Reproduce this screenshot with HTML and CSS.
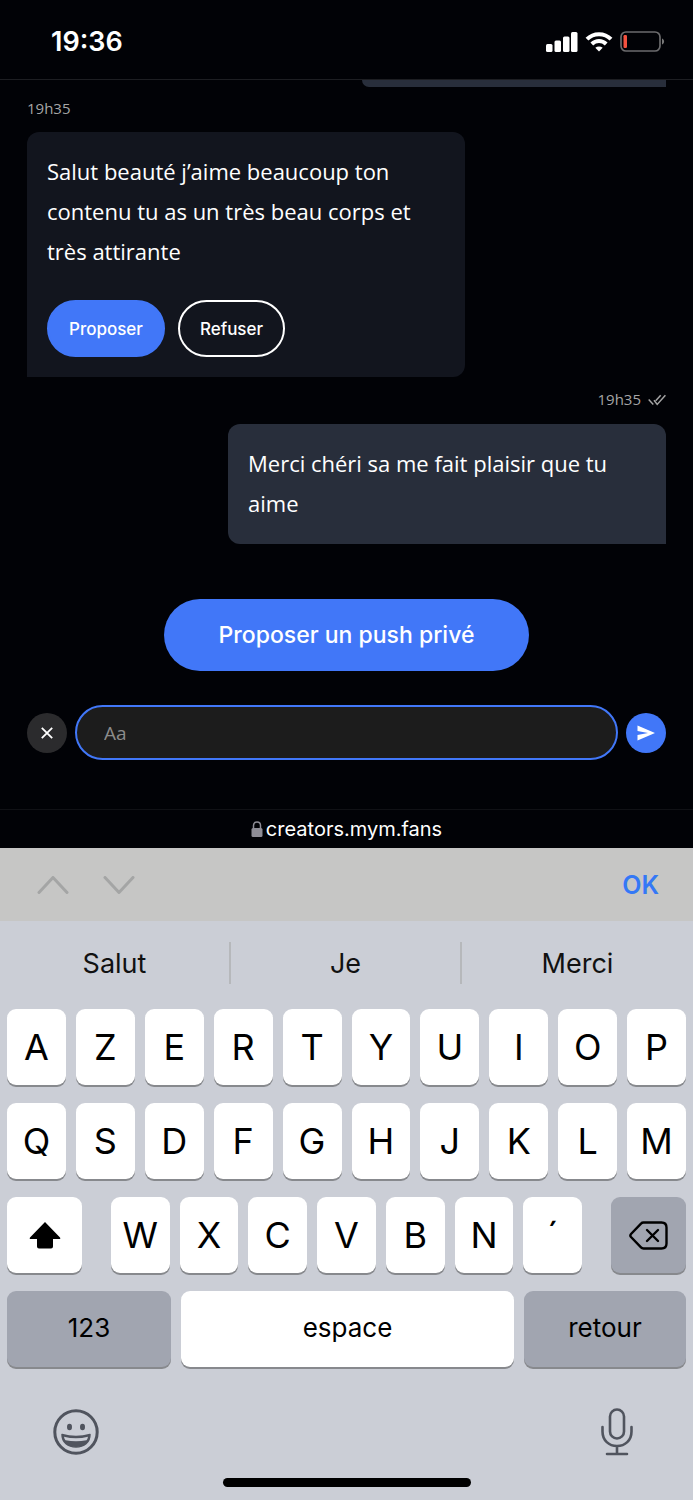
FILE: index.html
```html
<!DOCTYPE html>
<html lang="fr">
<head>
<meta charset="utf-8">
<meta name="viewport" content="width=device-width, initial-scale=1">
<title>Messages</title>
<link rel="stylesheet" href="styles.css">
</head>
<body>
<header class="status">
  <time class="clock">19:36</time>
  <div class="indicators">
    <svg width="32" height="20" viewBox="0 0 32 20" fill="#fff" aria-hidden="true"><rect x="0" y="12" width="6.500" height="8" rx="1.500"/><rect x="8.500" y="8.500" width="6.500" height="11.500" rx="1.500"/><rect x="17" y="4.500" width="6.500" height="15.500" rx="1.500"/><rect x="25" y="0" width="6.500" height="20" rx="1.500"/></svg>
    <svg width="28" height="20" viewBox="0 0 28 20" aria-hidden="true"><g fill="none" stroke="#fff" stroke-width="4"><path d="M2 7.200C8.500.5 19.500.5 26 7.200"/><path d="M6.800 12C11 8 17 8 21.200 12"/></g><path d="M10.300 15.700C12.500 14 15.500 14 17.700 15.700L14 19.600Z" fill="#fff"/></svg>
    <svg width="45" height="21" viewBox="0 0 45 21" aria-hidden="true"><rect x="1" y="1" width="39" height="19" rx="5" fill="none" stroke="#6b6b6d" stroke-width="1.700"/><rect x="3.500" y="4" width="3.500" height="13" rx="1.200" fill="#f4513f"/><path d="M42 7.500C44.800 8.500 44.800 12.500 42 13.500Z" fill="#777"/></svg>
  </div>
</header>
<main class="chat">
  <div class="bubble sent previous"></div>
  <time class="stamp">19h35</time>
  <article class="bubble received">
    <p>Salut beauté j’aime beaucoup ton contenu tu as un très beau corps et très attirante</p>
    <div class="actions">
      <button class="pill filled" type="button">Proposer</button>
      <button class="pill outline" type="button">Refuser</button>
    </div>
  </article>
  <div class="stamp stamp-sent"><time>19h35</time>
    <svg width="18" height="12" viewBox="0 0 18 12" fill="none" stroke="#a5a5a5" stroke-width="1.500" aria-hidden="true"><path d="M.7 5.600L5.300 10.400M6 6.200L9.200 10.400L17.400 1.200M7.700 6.700L12.700 1.200"/></svg>
  </div>
  <article class="bubble sent"><p>Merci chéri sa me fait plaisir que tu aime</p></article>
  <button class="push" type="button">Proposer un push privé</button>
  <form class="composer">
    <button class="round close" type="button" aria-label="Fermer"><svg width="12" height="12" viewBox="0 0 12 12" stroke="#fff" stroke-width="1.800" aria-hidden="true"><path d="M.8.8L11.200 11.200M11.200.8L.8 11.200"/></svg></button>
    <input class="message" type="text" placeholder="Aa" aria-label="Message">
    <button class="round send" type="button" aria-label="Envoyer"><svg width="18" height="16" viewBox="0 0 18 16" fill="#fff" aria-hidden="true"><path d="M.5.5L18 8L.5 15.500V10L11 8L.5 6Z"/></svg></button>
  </form>
</main>
<div class="address">
  <svg width="12" height="16" viewBox="0 0 12 16" aria-hidden="true"><path d="M2.500 8V4.500C2.500-.3 9.500-.3 9.500 4.500V8" fill="none" stroke="#8e8d96" stroke-width="1.500"/><rect x=".5" y="7" width="11" height="9" rx="1.500" fill="#8e8d96"/></svg>
  <span>creators.mym.fans</span>
</div>
<div class="accessory">
  <button type="button" aria-label="Champ précédent"><svg width="32" height="18" viewBox="0 0 32 18" aria-hidden="true"><path d="M2 16.500L16 1.500L30 16.500"/></svg></button>
  <button type="button" aria-label="Champ suivant"><svg width="32" height="18" viewBox="0 0 32 18" aria-hidden="true"><path d="M2 1.500L16 16.500L30 1.500"/></svg></button>
  <button class="ok" type="button">OK</button>
</div>
<section class="keyboard" aria-label="Clavier">
  <div class="suggestions"><button type="button">Salut</button><button type="button">Je</button><button type="button">Merci</button></div>
  <div class="keys">
    <div class="row ten"><button class="key">A</button><button class="key">Z</button><button class="key">E</button><button class="key">R</button><button class="key">T</button><button class="key">Y</button><button class="key">U</button><button class="key">I</button><button class="key">O</button><button class="key">P</button></div>
    <div class="row ten"><button class="key">Q</button><button class="key">S</button><button class="key">D</button><button class="key">F</button><button class="key">G</button><button class="key">H</button><button class="key">J</button><button class="key">K</button><button class="key">L</button><button class="key">M</button></div>
    <div class="row third">
      <button class="key side" aria-label="Majuscule"><svg width="32" height="28" viewBox="0 0 32 28" aria-hidden="true"><path d="M16 1L31 16.500Q32 18 30 18H24V25.500Q24 27.500 22 27.500H10Q8 27.500 8 25.500V18H2Q0 18 1 16.500Z"/></svg></button>
      <div class="row seven"><button class="key">W</button><button class="key">X</button><button class="key">C</button><button class="key">V</button><button class="key">B</button><button class="key">N</button><button class="key">´</button></div>
      <button class="key side dark" aria-label="Effacer"><svg width="39" height="29" viewBox="0 0 39 29" fill="none" stroke="#000" stroke-width="2.400" stroke-linejoin="round" stroke-linecap="round" aria-hidden="true"><path d="M14.500 1.500H32.500Q37.500 1.500 37.500 6.500V22.500Q37.500 27.500 32.500 27.500H14.500Q13 27.500 12 26.400L2 16Q.7 14.500 2 13L12 2.600Q13 1.500 14.500 1.500Z"/><path d="M18 9L29 20M29 9L18 20"/></svg></button>
    </div>
    <div class="row fourth"><button class="key word dark">123</button><button class="key word">espace</button><button class="key word dark">retour</button></div>
  </div>
  <div class="tools">
    <button type="button" aria-label="Emoji"><svg width="46" height="46" viewBox="0 0 46 46" aria-hidden="true"><circle cx="23" cy="23" r="21.200" fill="none" stroke="#50545e" stroke-width="3"/><ellipse cx="16.500" cy="18" rx="2.500" ry="3.200" fill="#50545e"/><ellipse cx="29.500" cy="18" rx="2.500" ry="3.200" fill="#50545e"/><path d="M9 25.500Q23 29.500 37 25.500C37 33.500 31 38 23 38S9 33.500 9 25.500Z" fill="#50545e" stroke="#50545e" stroke-width="1.500" stroke-linejoin="round"/><path d="M11 27.800Q23 30.800 35 27.800Q34.500 30.500 33.500 31.200Q23 33.500 12.500 31.200Q11.300 30 11 27.800Z" fill="#cbced6"/></svg></button>
    <button type="button" aria-label="Dictée"><svg width="32" height="48" viewBox="0 0 32 48" fill="none" stroke="#50545e" stroke-width="2.600" stroke-linecap="round" aria-hidden="true"><rect x="9" y="1.500" width="14" height="29" rx="7"/><path d="M1.500 19V23.500C1.500 32.500 8 38 16 38S30.500 32.500 30.500 23.500V19M16 38V46M6 46H26"/></svg></button>
  </div>
  <div class="home"></div>
</section>
</body>
</html>
```
FILE: styles.css
```css
* { box-sizing: border-box; }
body { display: flex; flex-direction: column; min-height: 100vh; margin: 0; background: #010206; color: #fff; font-family: Inter, sans-serif; }
button { border: 0; padding: 0; margin: 0; background: none; color: inherit; font: inherit; }
svg { display: block; flex: none; }
p { margin: 0; }
.status { display: flex; align-items: center; justify-content: space-between; height: 80px; padding: 4px 28px 0 51px; border-bottom: 1px solid #1d1e22; }
.clock { font-size: 27px; font-weight: 600; }
.indicators { display: flex; align-items: center; gap: 7px; }
.chat { display: flex; flex-direction: column; padding: 0 27px 49px; }
.bubble { width: 438px; max-width: 100%; padding: 19px 20px 21px; border-radius: 12px; font-family: "Open Sans", sans-serif; font-size: 22px; line-height: 40px; }
.received { padding-bottom: 20px; background: #12151e; border-bottom-left-radius: 0; align-self: flex-start; }
.sent { background: #282e3b; border-bottom-right-radius: 0; align-self: flex-end; }
.previous { width: 304px; height: 7px; padding: 0; border-radius: 0 0 0 12px; }
.stamp { margin: 11px 0 13px; font-family: "Open Sans", sans-serif; font-size: 15px; line-height: 21px; color: #a5a5a5; }
.stamp-sent { display: flex; align-items: center; justify-content: flex-end; gap: 7px; margin: 12px 0 14px; }
.actions { display: flex; gap: 13px; padding-top: 29px; }
.pill { min-width: 107px; height: 57px; padding: 0 20px; border: 2px solid #fff; border-radius: 29px; font-family: Inter, sans-serif; font-size: 17px; font-weight: 500; line-height: 24px; }
.filled { background: #4177f8; border-color: #4177f8; }
.push { align-self: center; min-width: 365px; height: 72px; margin: 55px 0 34px; padding: 0 24px; border-radius: 36px; background: #4177f8; font-size: 23px; font-weight: 500; }
.composer { display: flex; align-items: center; gap: 8px; }
.round { display: grid; place-items: center; flex: none; width: 40px; height: 40px; border-radius: 50%; }
.close { background: #2b2b2d; }
.send { background: #4177f8; }
.message { flex: 1; min-width: 0; height: 55px; padding: 0 27px; border: 2px solid #4177f8; border-radius: 28px; outline: 0; background: #1c1c1c; color: #fff; font-family: "Open Sans", sans-serif; font-size: 19px; }
.message::placeholder { color: #8b8b8b; opacity: 1; }
.address { display: flex; align-items: center; justify-content: center; gap: 3px; height: 39px; border-top: 1px solid #101115; font-size: 20px; }
.accessory { display: flex; align-items: center; gap: 34px; height: 73px; padding: 0 34px 0 37px; background: #c6c6c5; }
.accessory path { fill: none; stroke: #a4a5a5; stroke-width: 3; stroke-linecap: round; stroke-linejoin: round; }
.ok { margin-left: auto; color: #3478f6; font-size: 25px; font-weight: 600; }
.keyboard { flex: 1; padding-bottom: 13px; background: #cbced6; color: #000; }
.suggestions { display: grid; grid-template-columns: repeat(3, 1fr); padding: 21px 0 25px; color: #111; font-size: 27px; }
.suggestions button { height: 42px; border-right: 2px solid #b6b8bb; }
.suggestions button:last-child { border-right: 0; }
.keys { display: grid; gap: 18px; padding: 0 7px; }
.row { display: grid; gap: 10px; }
.ten { grid-template-columns: repeat(10, 1fr); }
.third { grid-template-columns: 75px calc(70% - 4px) 75px; gap: 0; justify-content: space-between; }
.seven { grid-template-columns: repeat(7, 1fr); }
.fourth { grid-template-columns: 164fr 333fr 162fr; }
.key { display: grid; place-items: center; min-width: 0; height: 76px; border-radius: 9px; background: #fff; box-shadow: 0 2px 0 #87898d; font-size: 36px; }
.dark { background: #a1a5b0; }
.word { padding-bottom: 3px; font-size: 26px; }
.tools { display: flex; align-items: center; justify-content: space-between; padding: 41px 60px 22px 53px; }
.home { width: 248px; height: 9px; margin: 0 auto; border-radius: 5px; background: #000; }
```
